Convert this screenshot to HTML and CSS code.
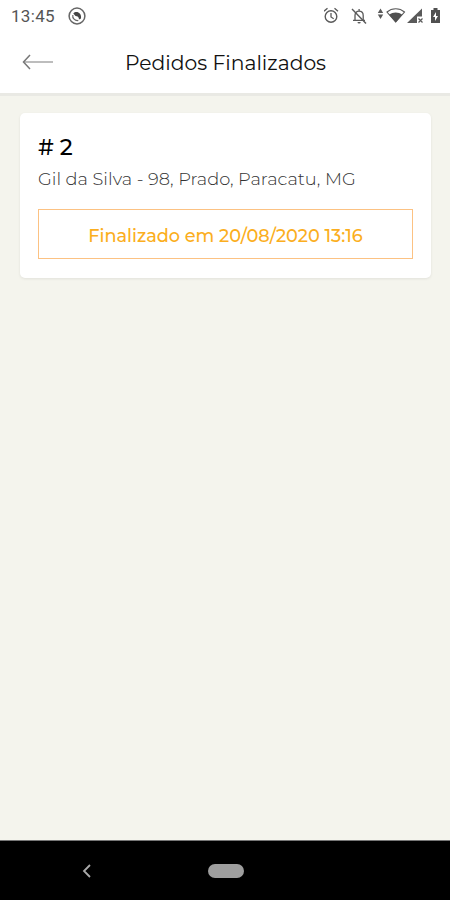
FILE: index.html
```
<!DOCTYPE html>
<html lang="pt-BR">
<head>
    <meta charset="UTF-8">
    <meta name="viewport" content="width=device-width, initial-scale=1.0">
    <title>Pedidos Finalizados</title>
    <link rel="stylesheet" href="styles.css">
</head>
<body>
    <div class="status-bar">
        <span class="time">13:45</span>
        <svg class="app-icon" width="18" height="18" viewBox="0 0 18 18" fill="none" stroke="#666">
            <circle cx="9" cy="9" r="7.9" stroke-width="1.5"/>
            <path d="M4.8 8a4.6 4.6 0 0 0 5.500 5.400" stroke-width="1.2"/>
            <path d="M5.300 6.500C8 3.500 14 5.500 13 11.500L11 12.500C11 10 9.500 9 7.500 9z" fill="#444" stroke="none"/>
        </svg>
        <div class="status-icons">
            <svg width="120" height="20" viewBox="0 0 120 20" fill="none" stroke="#5a5a5a">
                <!-- alarme -->
                <circle cx="7" cy="10.5" r="5.8" stroke-width="1.4"/>
                <path d="M7 7v4l2.7 1.7M0 5.2l3.5-3M14 5.2l-3.5-3" stroke-width="1.3"/>
                <!-- sino silenciado -->
                <path d="M31 14.2V9.5c0-2.5 1.5-4.4 4-4.4s4.2 1.9 4.2 4.4v4.7M29 14.4h12M35.1 3v2" stroke-width="1.3"/>
                <path d="M28 3l14 14.5" stroke-width="1.4"/>
                <path d="M33.5 16h3.2a1.6 1.6 0 0 1-3.2 0z" fill="#5a5a5a" stroke="none"/>
                <!-- dados -->
                <path d="M56.5 2.5l2.7 4.5h-5.4zM56.5 13l2.7-4.5h-5.4z" fill="#5a5a5a" stroke="none"/>
                <!-- wifi -->
                <path d="M63 6c5-4.300 12.500-4.300 17.500 0L71.700 16z" stroke-width="1.1"/>
                <path d="M65.200 8.700c3.800-3.100 9.200-3.100 13 0L71.700 16.500z" fill="#505050" stroke="none"/>
                <!-- sinal -->
                <path d="M83 17L98 2.500v8h-5V17z" fill="#5a5a5a" stroke="none"/>
                <path d="M94.500 12.500l4 4M98.500 12.500l-4 4" stroke-width="1.2"/>
                <!-- bateria -->
                <path d="M107 4h2.500V2h4v2h2.500v13h-9z" fill="#505050" stroke="none"/>
                <path d="M112 6l-3 5h2v4l3-5h-2z" fill="#fff" stroke="none"/>
            </svg>
        </div>
    </div>

    <header class="header">
        <svg class="back" width="32" height="16" viewBox="0 0 32 16" fill="none">
            <path d="M2 8h29" stroke="#999" stroke-width="1.3"/>
            <path d="M8 1L1.500 8L8 15" stroke="#777" stroke-width="1.5"/>
        </svg>
        <h1>Pedidos Finalizados</h1>
    </header>

    <main class="content">
        <div class="card">
            <h2># 2</h2>
            <p class="address">Gil da Silva - 98, Prado, Paracatu, MG</p>
            <div class="status"><span>Finalizado em 20/08/2020 13:16</span></div>
        </div>
    </main>

    <nav class="nav-bar">
        <svg class="nav-back" width="10" height="14" viewBox="0 0 10 14" fill="none">
            <path d="M8 1L2 7l6 6" stroke="#aaa" stroke-width="1.8"/>
        </svg>
        <div class="home"></div>
    </nav>
</body>
</html>
```
FILE: styles.css
```
* {
    box-sizing: border-box;
}
body {
    margin: 0;
    height: 900px;
    display: flex;
    flex-direction: column;
    font-family: Montserrat, Inter, sans-serif;
    background-color: #f4f4ed;
    color: #111;
}
h1, h2, p {
    margin: 0;
}
.status-bar {
    height: 32px;
    display: flex;
    align-items: center;
    padding: 0 6px 0 11px;
    background: #fff;
}
.time {
    width: 57px;
    font-family: Roboto, sans-serif;
    font-size: 17px;
    letter-spacing: 0.3px;
    color: #555;
}
.status-icons {
    margin-left: auto;
    height: 20px;
}
.status-icons svg {
    display: block;
}
.header {
    height: 64px;
    display: flex;
    align-items: center;
    padding: 0 22px 1px;
    background: #fff;
    border-bottom: 3px solid #e9e9e4;
}
.back {
    margin-right: 71px;
}
.header h1 {
    font-size: 20.3px;
    font-weight: 400;
    white-space: nowrap;
}
.content {
    flex: 1;
    padding: 17px 19px 0 20px;
}
.card {
    height: 165px;
    padding: 21px 18px 0;
    background: #fff;
    border-radius: 5px;
    box-shadow: 0 1px 3px rgba(0, 0, 0, 0.08);
}
.card h2 {
    font-size: 22.5px;
    font-weight: 500;
    line-height: 26px;
    color: #000;
}
.address {
    margin-top: 9px;
    font-size: 17.8px;
    font-weight: 300;
    line-height: 20px;
    white-space: nowrap;
    color: #333;
}
.status {
    height: 50px;
    margin-top: 20px;
    padding-top: 2px;
    display: flex;
    align-items: center;
    justify-content: center;
    border: 1.5px solid #fcc283;
    font-size: 17.7px;
    font-weight: 500;
    white-space: nowrap;
    color: #fbae20;
}
.nav-bar {
    height: 60px;
    display: flex;
    align-items: center;
    padding-left: 82px;
    background: #000;
    border-top: 1px solid #777;
}
.home {
    width: 36px;
    height: 14px;
    margin-left: 116px;
    border-radius: 7px;
    background: #9e9e9e;
}
```
